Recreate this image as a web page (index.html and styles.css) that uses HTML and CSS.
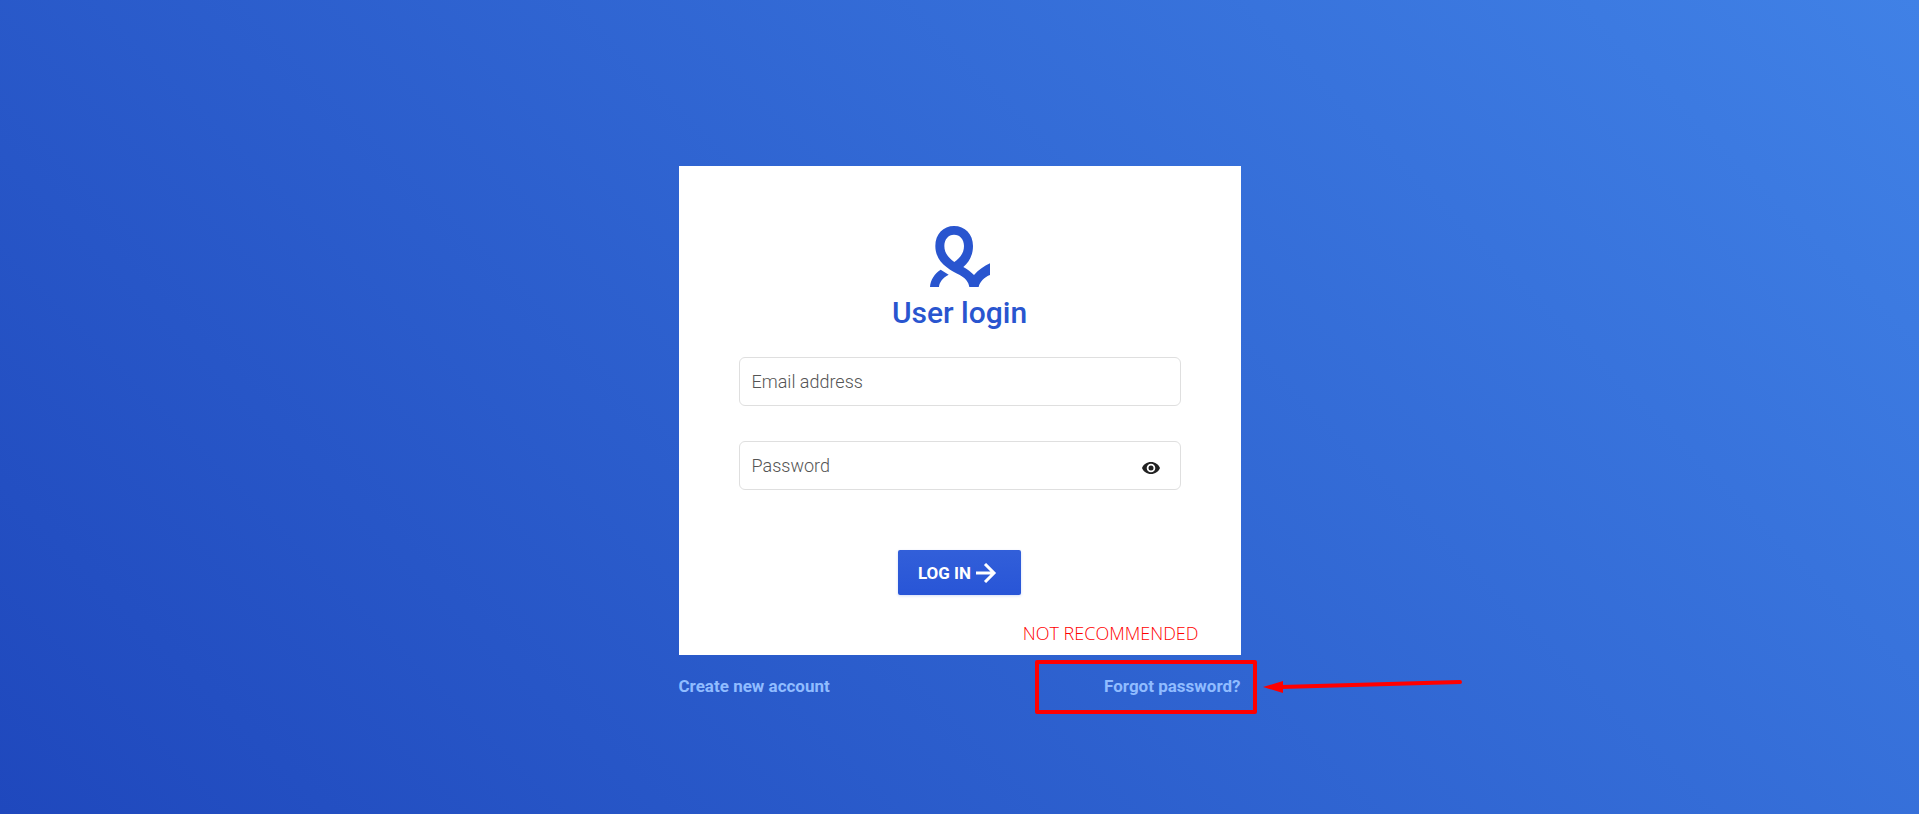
FILE: index.html
```html
<!DOCTYPE html>
<html lang="en">
<head>
<meta charset="UTF-8">
<meta name="viewport" content="width=device-width, initial-scale=1.0">
<title>User login</title>
<link rel="stylesheet" href="styles.css">
</head>
<body>

<main class="login">
<form class="card" onsubmit="return false">
<svg class="logo" viewBox="90 48 180 183" aria-hidden="true">
<path fill-rule="evenodd" d="M162 48C195 48 219 72 219 108C219 134 208 156 190 171C202 178 214 187 222 195C236 180 252 168 270 160V195C254 201 239 215 236 231H208C206 215 195 203 178 194C150 180 106 158 106 108C106 72 130 48 162 48ZM162 74C145 74 133 88 133 108C133 129 146 144 163 156C180 144 192 129 192 108C192 88 180 74 162 74Z"/>
<path d="M122 179L146 194C128 203 118 217 117 231H90C91 210 104 190 122 179Z"/>
</svg>
<h1 class="title">User login</h1>

<div class="field">
<input class="input" type="email" placeholder="Email address" aria-label="Email address">
</div>
<div class="field">
<input class="input" type="password" placeholder="Password" aria-label="Password">
<button class="toggle" type="button" aria-label="Show password">
<svg viewBox="0 0 18 12" width="18" height="12">
<path fill-rule="evenodd" d="M9 0C4.8 0 1.4 2.5 0 6C1.4 9.500 4.800 12 9 12S16.600 9.500 18 6C16.600 2.500 13.200 0 9 0ZM9 1.700A4.300 4.300 0 1 1 9 10.300A4.300 4.300 0 1 1 9 1.700Z"/>
<circle cx="9" cy="6" r="2.500"/>
</svg>
</button>
</div>

<button class="submit" type="submit">LOG IN
<svg viewBox="0 0 22 20" width="22" height="20" aria-hidden="true">
<path d="M1 10H19M10 1L19 10L10 19"/>
</svg>
</button>
</form>

<nav class="links">
<a class="link" href="#">Create new account</a>
<a class="link" href="#">Forgot password?</a>
</nav>

<!-- Annotations over the form -->
<span class="note">NOT RECOMMENDED</span>
<div class="highlight"></div>
<svg class="arrow" viewBox="0 0 200 16" aria-hidden="true">
<path class="arrow-line" d="M18 10L197 5"/>
<path class="arrow-head" d="M0 10L20 4V16Z"/>
</svg>
</main>

</body>
</html>
```

FILE: styles.css
```css
* {
box-sizing: border-box;
}

body {
display: flex;
justify-content: center;
align-items: flex-start;
margin: 0;
padding: 166px 20px 20px;
min-height: 100vh;
background: linear-gradient(45deg, #1f48bd, #4081e6);
font-family: Roboto, "Liberation Sans", sans-serif;
}

.login {
position: relative;
width: 100%;
max-width: 562px;
}

.card {
display: flex;
flex-direction: column;
align-items: center;
padding: 60px;
background: #fff;
}

.logo {
width: 60px;
height: 61px;
fill: #2955cf;
}

.title {
margin: 8px 0 26px;
color: #2955cf;
font-size: 30px;
font-weight: 500;
line-height: 36px;
}

/* Form fields */
.field {
display: flex;
position: relative;
width: 100%;
margin-bottom: 35px;
}

.input {
width: 100%;
height: 49px;
padding: 0 12px;
border: 1px solid #dfdfdf;
border-radius: 6px;
background: #fff;
color: #222;
font-family: inherit;
font-size: 18px;
font-weight: 300;
}

.input::placeholder {
color: #555;
}

/* Eye button inside the password box */
.toggle {
display: flex;
position: absolute;
top: 16px;
right: 15px;
padding: 5px 6px;
border: 0;
background: none;
fill: #222;
cursor: pointer;
}

.submit {
display: flex;
align-items: center;
gap: 4px;
height: 45px;
margin-top: 25px;
padding: 0 24px 0 20px;
border: 0;
border-radius: 2px;
background: linear-gradient(#325fd9, #2855d7);
box-shadow: 0 1px 3px rgba(40, 85, 215, 0.2);
color: #fff;
font-family: inherit;
font-size: 17px;
font-weight: 700;
cursor: pointer;
}

.submit svg {
fill: none;
stroke: #fff;
stroke-width: 3;
}

/* Links under the card */
.links {
display: flex;
justify-content: space-between;
padding-top: 19px;
}

.link {
color: #90bcff;
font-size: 17px;
font-weight: 700;
line-height: 24px;
text-decoration: none;
}

/* Red annotations */
.note {
position: absolute;
right: 42px;
bottom: 53px;
color: #f00;
font-family: "Open Sans", sans-serif;
font-size: 18px;
font-weight: 300;
line-height: 24px;
}

.highlight {
position: absolute;
right: -16px;
bottom: -16px;
width: 222px;
height: 54px;
border: 4px solid #f00;
border-radius: 2px;
pointer-events: none;
}

.arrow {
position: absolute;
left: 100%;
bottom: 5px;
width: 200px;
height: 16px;
margin-left: 22px;
}

.arrow-line {
stroke: #f00;
stroke-width: 4;
stroke-linecap: round;
}

.arrow-head {
fill: #f00;
}
```
